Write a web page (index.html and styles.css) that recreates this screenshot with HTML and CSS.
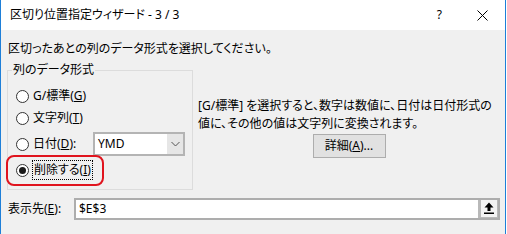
FILE: index.html
```html
<!DOCTYPE html>
<html lang="ja">
<head>
    <meta charset="UTF-8">
    <meta name="viewport" content="width=device-width, initial-scale=1.0">
    <title>区切り位置指定ウィザード - 3 / 3</title>
    <link rel="stylesheet" href="styles.css">
</head>
<body>
    <div class="window">
        <div class="titlebar">
            <span class="title">区切り位置指定ウィザード - 3 / 3</span>
            <span class="help">?</span>
            <svg class="close" width="11" height="11" viewBox="0 0 11 11">
                <path d="M0.5 0.5 L10.5 10.5 M10.5 0.5 L0.5 10.5" stroke="#000" stroke-width="1" fill="none"/>
            </svg>
        </div>

        <div class="content">
            <p class="lead">区切ったあとの列のデータ形式を選択してください。</p>

            <div class="main">
                <fieldset class="group">
                    <legend>列のデータ形式</legend>
                    <div class="option">
                        <span class="radio"></span>
                        <span>G/標準(<u>G</u>)</span>
                    </div>
                    <div class="option option-text">
                        <span class="radio"></span>
                        <span>文字列(<u>T</u>)</span>
                    </div>
                    <div class="option option-date">
                        <span class="radio"></span>
                        <span>日付(<u>D</u>):</span>
                        <div class="combo">
                            <span class="combo-value">YMD</span>
                            <span class="combo-btn">
                                <svg width="9" height="6" viewBox="0 0 9 6">
                                    <path d="M0.5 1 L4.5 5 L8.5 1" stroke="#555" stroke-width="1" fill="none"/>
                                </svg>
                            </span>
                        </div>
                    </div>
                    <div class="option option-skip">
                        <span class="radio checked"></span>
                        <span class="focus">削除する(<u>I</u>)</span>
                        <span class="mark"></span>
                    </div>
                </fieldset>

                <div class="info">
                    <p>[G/標準] を選択すると、数字は数値に、日付は日付形式の<br>値に、その他の値は文字列に変換されます。</p>
                    <button class="detail-btn">詳細(<u>A</u>)...</button>
                </div>
            </div>

            <div class="dest">
                <span>表示先(<u>E</u>):</span>
                <div class="dest-field">
                    <span class="dest-value">$E$3</span>
                    <span class="dest-btn">
                        <span class="dest-face">
                            <svg width="16" height="17" viewBox="0 0 16 17">
                                <path d="M8 2.5 L12.5 7.5 L9.5 7.5 L9.5 11 L6.5 11 L6.5 7.5 L3.5 7.5 Z" fill="#000"/>
                                <rect x="3" y="12.5" width="10" height="1.5" fill="#000"/>
                            </svg>
                        </span>
                    </span>
                </div>
            </div>
        </div>
    </div>
</body>
</html>
```

FILE: styles.css
```css
* {
    margin: 0;
    padding: 0;
    box-sizing: border-box;
}

body {
    background: #ffffff;
    font-family: "Noto Sans", "Noto Sans CJK JP", sans-serif;
    font-size: 12px;
    line-height: 16px;
    color: #000000;
    font-feature-settings: "palt";
    overflow: hidden;
}

.window {
    width: 506px;
    height: 234px;
    background: #f0f0f0;
    border-left: 1px solid #1e7fd8;
    border-right: 1px solid #1e7fd8;
}

.titlebar {
    height: 30px;
    background: #ffffff;
    display: flex;
    align-items: center;
    padding-left: 9px;
}

.title {
    flex: 1;
}

.help {
    margin-right: 35px;
}

.close {
    margin-right: 17px;
}

.content {
    padding: 0 5px 0 6px;
}

.lead {
    margin-top: 11px;
    margin-left: 1px;
}

.main {
    display: flex;
    margin-top: 5px;
}

.group {
    width: 186px;
    border: 1px solid #dcdcdc;
    padding: 8px 7px 5px 8px;
}

.group legend {
    margin-left: -4px;
    padding: 0 1px;
}

.option {
    position: relative;
    display: flex;
    align-items: center;
    gap: 4px;
    height: 20px;
}

.option-text {
    margin-top: 2px;
}

.option-date {
    margin-top: 4px;
    height: 24px;
}

.option-skip {
    height: 28px;
}

.radio {
    width: 13px;
    height: 13px;
    border: 1px solid #333333;
    border-radius: 50%;
    background: #ffffff;
    display: flex;
    align-items: center;
    justify-content: center;
    flex-shrink: 0;
}

.radio.checked::after {
    content: "";
    width: 7px;
    height: 7px;
    border-radius: 50%;
    background: #1a1a1a;
}

.focus {
    outline: 1px dotted #000000;
    padding: 1px 1px;
}

.mark {
    position: absolute;
    left: -10px;
    top: -1px;
    width: 98px;
    height: 31px;
    border: 2px solid #e0141e;
    border-radius: 8px;
}

.combo {
    margin-left: auto;
    width: 92px;
    height: 24px;
    display: flex;
    border: 2px solid #b4b4b4;
    background: #ffffff;
}

.combo-value {
    flex: 1;
    padding-left: 3px;
    line-height: 20px;
}

.combo-btn {
    width: 16px;
    background: #e6e6e6;
    display: flex;
    align-items: center;
    justify-content: center;
}

.info {
    width: 302px;
    margin-left: 5px;
    padding-top: 35px;
    display: flex;
    flex-direction: column;
    align-items: center;
}

.info p {
    line-height: 18px;
    align-self: flex-start;
}

.detail-btn {
    margin-top: 1px;
    width: 73px;
    height: 24px;
    background: #e1e1e1;
    border: 1px solid #adadad;
    font: inherit;
    color: #000000;
}

.dest {
    display: flex;
    align-items: center;
    margin-top: 8px;
    padding-left: 1px;
}

.dest-field {
    margin-left: auto;
    width: 426px;
    height: 22px;
    display: flex;
    border: 2px solid #adadad;
    background: #ffffff;
}

.dest-value {
    flex: 1;
    padding-left: 3px;
    line-height: 18px;
}

.dest-btn {
    width: 20px;
    background: #b9b9b9;
    padding: 0 1px 1px 3px;
    display: flex;
}

.dest-face {
    flex: 1;
    background: #f3f3f3;
    display: flex;
}
```
